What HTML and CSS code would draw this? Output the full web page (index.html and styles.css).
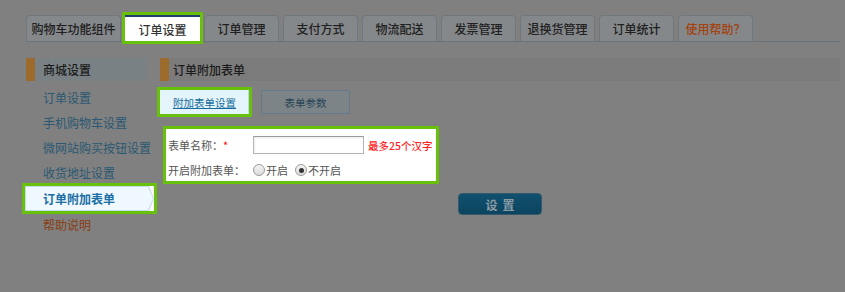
FILE: index.html
```html
<!DOCTYPE html>
<html lang="zh-CN">
<head>
<meta charset="utf-8">
<title>订单附加表单</title>
<link rel="stylesheet" href="styles.css">
</head>
<body>
<div class="page">
  <nav class="tabs">
    <a class="tab tab-wide">购物车功能组件</a>
    <a class="tab tab-active">订单设置</a>
    <a class="tab">订单管理</a>
    <a class="tab">支付方式</a>
    <a class="tab">物流配送</a>
    <a class="tab">发票管理</a>
    <a class="tab">退换货管理</a>
    <a class="tab">订单统计</a>
    <a class="tab tab-help">使用帮助？</a>
  </nav>
  <div class="content">
    <aside class="side">
      <div class="side-head">商城设置</div>
      <ul class="side-list">
        <li class="side-item">订单设置</li>
        <li class="side-item">手机购物车设置</li>
        <li class="side-item">微网站购买按钮设置</li>
        <li class="side-item">收货地址设置</li>
        <li class="side-item side-active"><span class="shape-border"><span class="shape-fill">订单附加表单</span></span></li>
        <li class="side-item side-help">帮助说明</li>
      </ul>
    </aside>
    <main class="main">
      <div class="main-head">订单附加表单</div>
      <div class="subtabs">
        <a class="subtab subtab-active">附加表单设置</a>
        <a class="subtab">表单参数</a>
      </div>
      <form class="form">
        <div class="row">
          <label class="lbl">表单名称：<span class="req">*</span></label>
          <input class="txt" type="text">
          <span class="hint">最多25个汉字</span>
        </div>
        <div class="row">
          <span class="lbl">开启附加表单：</span>
          <label class="radio"><span class="dot"></span>开启</label>
          <label class="radio"><span class="dot dot-on"></span>不开启</label>
        </div>
      </form>
      <div class="actions">
        <button class="btn" type="button">设置</button>
      </div>
    </main>
  </div>
</div>
</body>
</html>
```

FILE: styles.css
```css
* { box-sizing: border-box; }
html, body { margin: 0; padding: 0; }
body {
  background: #808080;
  font-family: "Noto Sans CJK SC", "Liberation Sans", sans-serif;
  font-size: 12px;
  color: #262626;
}
.page {
  padding: 15px 5px 0 26px;
}

/* top tabs */
.tabs {
  display: flex;
  gap: 4px;
  border-bottom: 1px solid #6b737a;
  height: 27px;
}
.tab {
  width: 75px;
  height: 26px;
  display: flex;
  align-items: center;
  justify-content: center;
  border: 1px solid #70787e;
  border-bottom: 0;
  border-radius: 4px 4px 0 0;
  background: #85888b;
  color: #202020;
  font-size: 12px;
  font-weight: 500;
  white-space: nowrap;
}
.tab-wide { width: 95px; }
.tab-active {
  background: #ffffff;
  color: #333333;
  border: 0;
  border-top: 2px solid #1f3d70;
  border-radius: 0;
  outline: 3px solid #67c10b;
}
.tab-help { color: #a3420f; }

/* content */
.content {
  display: flex;
  margin-top: 16px;
}
.side {
  width: 121px;
  flex: none;
}
.side-head {
  height: 23px;
  line-height: 23px;
  background: #7a8185;
  border-left: 9px solid #9c6b2c;
  padding-left: 8px;
  color: #1b1b1b;
  font-weight: 500;
}
.side-list {
  list-style: none;
  margin: 4px 0 0;
  padding: 0;
}
.side-item {
  height: 25px;
  line-height: 25px;
  padding-left: 17px;
  color: #2a5872;
  white-space: nowrap;
}
.side-help { color: #8a3d12; }
.side-active {
  margin: 1px 0 1px -1px;
  width: 129px;
  padding: 0;
  background: #ffffff;
  outline: 3px solid #67c10b;
}
.shape-border {
  display: block;
  height: 25px;
  padding: 1px;
  background: #c6dce9;
  clip-path: polygon(0 0, calc(100% - 5px) 0, 100% 50%, calc(100% - 5px) 100%, 0 100%);
}
.shape-fill {
  display: block;
  height: 23px;
  line-height: 23px;
  padding-left: 17px;
  background: #eef8fe;
  color: #1b6ea3;
  font-weight: bold;
  clip-path: polygon(0 0, calc(100% - 5px) 0, 100% 50%, calc(100% - 5px) 100%, 0 100%);
}

/* main */
.main {
  flex: 1;
  margin-left: 13px;
}
.main-head {
  height: 23px;
  line-height: 23px;
  background: #7b7b7b;
  border-left: 9px solid #9c6b2c;
  padding-left: 4px;
  color: #1b1b1b;
  font-weight: 500;
}
.subtabs {
  display: flex;
  gap: 12px;
  margin-top: 9px;
}
.subtab {
  width: 89px;
  height: 24px;
  display: flex;
  align-items: center;
  justify-content: center;
  border: 1px solid #66798a;
  background: #7c8488;
  color: #2a4456;
  font-size: 10.5px;
}
.subtab-active {
  background: #e3f5fb;
  border: 1px solid #e3f5fb;
  border-right-color: #b9dbe9;
  color: #176b9c;
  text-decoration: underline;
  outline: 3px solid #67c10b;
}

.form {
  margin: 15px 0 0 6px;
  width: 270px;
  height: 52px;
  background: #ffffff;
  outline: 3px solid #67c10b;
  padding: 7px 0 0 2px;
  display: flex;
  flex-direction: column;
  gap: 7px;
}
.row {
  display: flex;
  align-items: center;
  height: 18px;
}
.lbl {
  width: 85px;
  flex: none;
  font-size: 11px;
  color: #555555;
  white-space: nowrap;
}
.req { color: #ff0000; }
.txt {
  width: 111px;
  height: 18px;
  margin: 0;
  border: 1px solid #b4b4b4;
  border-top-color: #9a9a9a;
  box-shadow: inset 1px 1px 2px rgba(0,0,0,0.08);
  padding: 0 3px;
  font: inherit;
}
.hint {
  margin-left: 4px;
  color: #ff2424;
  font-size: 10.5px;
  font-weight: 500;
  white-space: nowrap;
}
.radio {
  display: inline-flex;
  align-items: center;
  font-size: 11px;
  color: #555555;
  margin-right: 7px;
  white-space: nowrap;
}
.dot {
  width: 12px;
  height: 12px;
  border-radius: 50%;
  border: 1px solid #9a9a9a;
  background: linear-gradient(#f4f4f4, #dcdcdc);
  display: inline-flex;
  align-items: center;
  justify-content: center;
  margin-right: 1px;
}
.dot-on::after {
  content: "";
  width: 5px;
  height: 5px;
  border-radius: 50%;
  background: #333333;
}

.actions {
  display: flex;
  justify-content: center;
  margin-top: 12px;
}
.btn {
  width: 84px;
  height: 22px;
  border: 1px solid #35596c;
  border-radius: 4px;
  background: linear-gradient(#10506e, #0c445f);
  color: #8b9ba5;
  font-family: inherit;
  font-size: 12px;
  font-weight: bold;
  letter-spacing: 5px;
  padding: 0 0 0 5px;
}
```
